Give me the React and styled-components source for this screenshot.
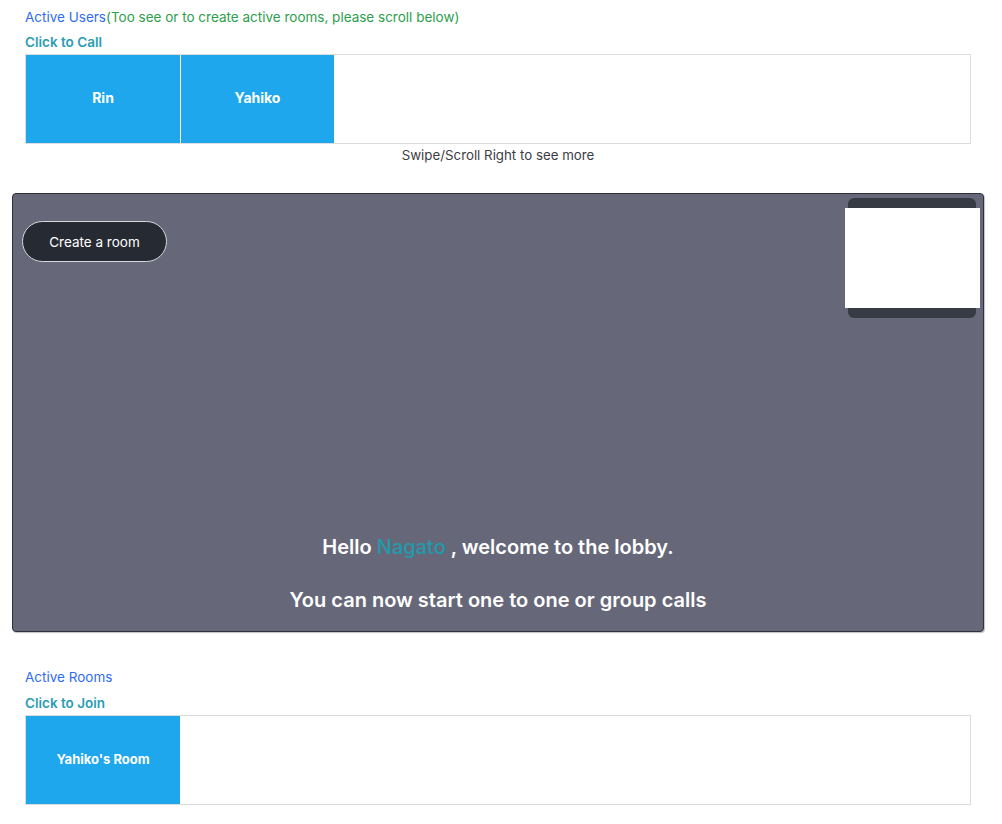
import React from 'react';
import styled, { createGlobalStyle } from 'styled-components';

const GlobalStyle = createGlobalStyle`
  html, body {
    margin: 0;
    padding: 0;
    background: #ffffff;
    font-family: Inter, "Noto Sans", sans-serif;
  }
`;

const Page = styled.div`
  width: 1002px;
  padding-top: 8px;
`;

const ListSection = styled.section`
  padding: 0 31px 0 25px;
`;

const Heading = styled.div`
  font-size: 13.5px;
  line-height: 18px;
  color: #2f6cf0;
`;

const Hint = styled.span`
  color: #2e9e4c;
`;

const SubHeading = styled.div`
  margin-top: 7px;
  font-size: 13.5px;
  font-weight: 600;
  line-height: 18px;
  color: #2a9cb3;
`;

const Strip = styled.div`
  margin-top: 3px;
  height: 88px;
  border: 1px solid #dcdcdc;
  display: flex;
  overflow-x: auto;
`;

const Tile = styled.button`
  flex: 0 0 ${({ $width }) => $width}px;
  height: 88px;
  padding: 0 0 3px;
  border: none;
  border-right: 1px solid #ffffff;
  background: #1ea7ec;
  color: #ffffff;
  font-family: inherit;
  font-size: ${({ $small }) => ($small ? 13 : 14)}px;
  font-weight: 700;
  cursor: pointer;
`;

const ScrollNote = styled.div`
  text-align: center;
  font-size: 13.3px;
  line-height: 18px;
  color: #3d3d44;
  margin-top: 2px;
`;

const Lobby = styled.main`
  margin: 29px 18px 0 12px;
  height: 437px;
  background: #67677a;
  border: 1px solid #30303a;
  border-radius: 4px;
  box-shadow: 1px 1px 1px rgba(0, 0, 0, 0.25);
  display: flex;
  flex-direction: column;
`;

const LobbyTop = styled.div`
  display: flex;
  justify-content: space-between;
  align-items: flex-start;
  padding: 4px 7px 0 9px;
`;

const CreateButton = styled.button`
  margin-top: 23px;
  width: 145px;
  height: 41px;
  border-radius: 21px;
  border: 1px solid #d8d8de;
  background: #262a33;
  color: #ffffff;
  font-family: inherit;
  font-size: 13.5px;
  cursor: pointer;
`;

const SelfView = styled.div`
  width: 128px;
  height: 120px;
  border-radius: 6px;
  background: #373b44;
  padding: 10px 0;
  box-sizing: border-box;
`;

const VideoScreen = styled.div`
  height: 100px;
  margin: 0 -4px 0 -3px;
  background: #ffffff;
`;

const Welcome = styled.div`
  margin-top: auto;
  padding-bottom: 19px;
  text-align: center;
  color: #ffffff;
  font-size: 20px;
  font-weight: 600;
  line-height: 24px;
  display: flex;
  flex-direction: column;
  gap: 29px;
`;

const UserName = styled.span`
  color: #1f9bab;
  font-weight: 500;
`;

const RoomsSection = styled(ListSection)`
  margin-top: 36px;

  ${SubHeading} {
    margin-top: 8px;
  }
`;

const users = [
  { name: 'Rin', width: 155 },
  { name: 'Yahiko', width: 154 },
];

export default function App() {
  return (
    <Page>
      <GlobalStyle />
      <ListSection>
        <Heading>
          Active Users<Hint>(Too see or to create active rooms, please scroll below)</Hint>
        </Heading>
        <SubHeading>Click to Call</SubHeading>
        <Strip>
          {users.map((u) => (
            <Tile key={u.name} $width={u.width}>
              {u.name}
            </Tile>
          ))}
        </Strip>
        <ScrollNote>Swipe/Scroll Right to see more</ScrollNote>
      </ListSection>

      <Lobby>
        <LobbyTop>
          <CreateButton>Create a room</CreateButton>
          <SelfView>
            <VideoScreen />
          </SelfView>
        </LobbyTop>
        <Welcome>
          <div>
            Hello <UserName>Nagato</UserName> , welcome to the lobby.
          </div>
          <div>You can now start one to one or group calls</div>
        </Welcome>
      </Lobby>

      <RoomsSection>
        <Heading>Active Rooms</Heading>
        <SubHeading>Click to Join</SubHeading>
        <Strip>
          <Tile $width={155} $small>
            Yahiko's Room
          </Tile>
        </Strip>
      </RoomsSection>
    </Page>
  );
}
